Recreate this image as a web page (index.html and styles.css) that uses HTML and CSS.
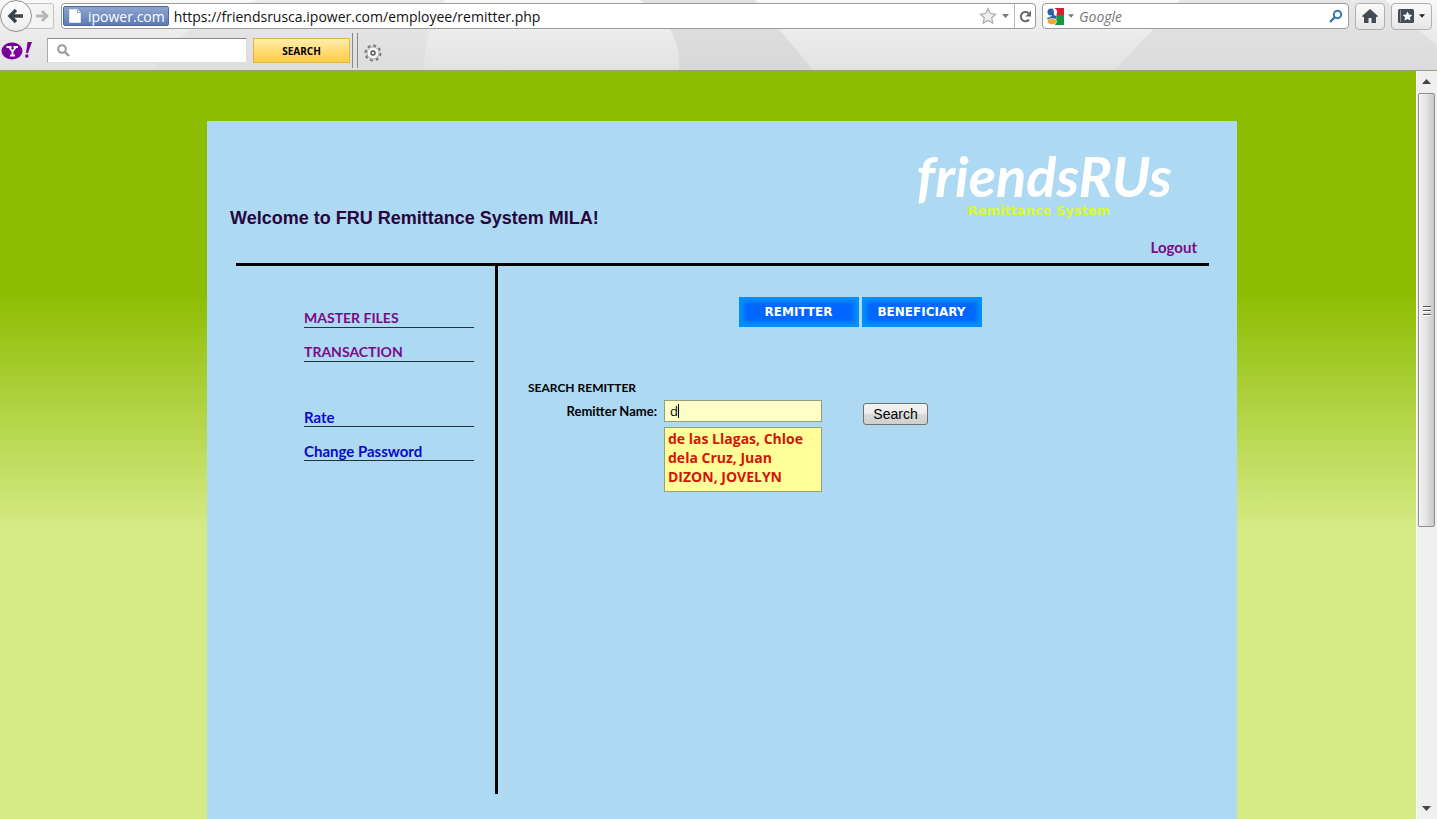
FILE: index.html
```html
<!DOCTYPE html>
<html lang="en">
<head>
<meta charset="utf-8">
<title>FRU Remittance System</title>
<link rel="stylesheet" href="styles.css">
</head>
<body>
<header class="browser">
  <svg class="persona" preserveAspectRatio="none" viewBox="0 0 1437 70" aria-hidden="true">
    <path d="M260 0Q180 20 155 70H424Q424 30 445 0Z" fill="#d3d3d5" opacity=".35"/>
    <path d="M640 0Q682 25 679 70H813L755 0Z" fill="#cfcfd1" opacity=".55"/>
    <path d="M1180 0L1115 70H1437V46L1385 0Z" fill="#cfcfd1" opacity=".4"/>
  </svg>
  <div class="navbar">
    <div class="history">
      <button class="back" aria-label="Back"><svg width="18" height="16" viewBox="0 0 18 16"><path d="M9 2L3 8l6 6M3.500 8H16" fill="none" stroke="#3b444d" stroke-width="3.400"/></svg></button>
      <button class="forward" aria-label="Forward"><svg width="13" height="14" viewBox="0 0 13 14"><path d="M6 2l5 5-5 5M0 7h10" fill="none" stroke="#b5b8bb" stroke-width="3"/></svg></button>
    </div>
    <div class="address">
      <span class="identity"><svg width="12" height="14" viewBox="0 0 12 14"><path d="M.5.500h8l3 3v10H.5z" fill="#fff" stroke="#dbe2ef"/><path d="M8.500.500v3h3" fill="none" stroke="#9aa9c8"/></svg>ipower.com</span>
      <input class="url" aria-label="Address" value="https://friendsrusca.ipower.com/employee/remitter.php">
      <button class="plain" aria-label="Bookmark"><svg width="18" height="18" viewBox="0 0 18 18"><path d="M9 1.500l2.300 5 5.400.600-4 3.700 1.100 5.400L9 13.500l-4.800 2.700 1.100-5.400-4-3.700 5.400-.600z" fill="#eee" stroke="#aaa" stroke-width="1.200"/></svg></button>
      <button class="plain" aria-label="History list"><svg width="7" height="4" viewBox="0 0 7 4"><path d="M0 0h7L3.500 4z" fill="#777"/></svg></button>
      <button class="plain reload" aria-label="Reload"><svg width="13" height="13" viewBox="0 0 13 13"><path d="M10 9.500A4.600 4.600 0 1 1 9.500 3.200" fill="none" stroke="#666" stroke-width="2"/><path d="M12 .5v6H6.500z" fill="#666"/></svg></button>
    </div>
    <div class="engine">
      <svg width="17" height="17" viewBox="0 0 17 17"><path d="M8 0h9v7H9z" fill="#d3222a"/><path d="M10 7h7v10H8z" fill="#129a43"/><path d="M0 0h8v11H0z" fill="#fff"/><circle cx="4" cy="4" r="3.500" fill="#2c5fab"/><path d="M0 10q5-1 7-5l3 3-2 4H1z" fill="#2c5fab"/><path d="M6 0q5 1 4 5l-1 3q-3-1-2-4z" fill="#fff"/><ellipse cx="5" cy="13.500" rx="4.500" ry="3" fill="#eaa927" stroke="#fff" stroke-width=".6"/></svg>
      <svg width="6" height="4" viewBox="0 0 7 4"><path d="M0 0h7L3.500 4z" fill="#777"/></svg>
      <input class="engine-input" aria-label="Google search" placeholder="Google">
      <button class="plain" aria-label="Go"><svg width="14" height="14" viewBox="0 0 14 14"><circle cx="8.500" cy="5.500" r="3.700" fill="#f4fbff" stroke="#3877b5" stroke-width="2"/><path d="M5.800 8.200L1 13" stroke="#3877b5" stroke-width="2.400"/></svg></button>
    </div>
    <button class="tool" aria-label="Home"><svg width="16" height="14" viewBox="0 0 16 14"><path d="M8 0l8 7-1 1.200-1-.8V14H9.500V9h-3v5H2V7.400l-1 .8L0 7z" fill="#434b54"/></svg></button>
    <button class="tool wide" aria-label="Bookmarks"><svg width="16" height="14" viewBox="0 0 16 14"><rect width="16" height="14" rx="1.500" fill="#434b54"/><path d="M2.500 1v12" stroke="#8c959e"/><path d="M9.500 2.500l1.500 3 3.300.400-2.400 2.300.6 3.300-3-1.600-3 1.600.6-3.300L4.700 5.900 8 5.500z" fill="#fff"/></svg><svg width="6" height="4" viewBox="0 0 7 4"><path d="M0 0h7L3.500 4z" fill="#222"/></svg></button>
  </div>
  <div class="yahoo">
    <svg width="31" height="20" viewBox="0 0 31 20" role="img" aria-label="Yahoo"><ellipse cx="11" cy="10" rx="10.500" ry="8.500" fill="#7b0099"/><path d="M5.500 6h5M12.500 6h4.500M8 6l3.500 4.500L15 6M11.500 10v4M9 14.500h5" fill="none" stroke="#fff" stroke-width="1.800"/><path d="M26.500 1H31l-4 11h-2zM24.300 13.500h3v3h-3z" fill="#7b0099"/></svg>
    <label class="ysearch"><svg width="13" height="13" viewBox="0 0 13 13"><circle cx="5" cy="5" r="3.800" fill="none" stroke="#999" stroke-width="2"/><path d="M8 8l4 4" stroke="#999" stroke-width="2.400"/></svg><input class="ysearch-input" aria-label="Yahoo search"></label>
    <button class="ybutton">SEARCH</button>
    <span class="divider"></span>
    <button class="plain gear" aria-label="Settings"><svg width="18" height="18" viewBox="0 0 18 18"><circle cx="9" cy="9" r="7.500" fill="none" stroke="#777" stroke-width="2" stroke-dasharray="3 2.890"/><circle cx="9" cy="9" r="6" fill="#f4f4f4" stroke="#999" stroke-width=".8"/><circle cx="9" cy="9" r="2" fill="#eee" stroke="#555" stroke-width="1.400"/></svg></button>
  </div>
</header>
<div class="view">
  <div class="page">
    <div class="panel">
      <div class="banner">
        <h1 class="welcome">Welcome to FRU Remittance System MILA!</h1>
        <div class="brand">
          <div class="logo"><span class="logo-name">friendsRUs</span><span class="logo-sub">Remittance System</span></div>
          <a class="logout" href="#">Logout</a>
        </div>
      </div>
      <div class="columns">
        <nav class="menu">
          <a class="item visited" href="#">MASTER FILES</a>
          <a class="item visited" href="#">TRANSACTION</a>
          <a class="item second" href="#">Rate</a>
          <a class="item" href="#">Change Password</a>
        </nav>
        <main class="main">
          <div class="tabs">
            <button class="tab">REMITTER</button>
            <button class="tab">BENEFICIARY</button>
          </div>
          <h2 class="heading">SEARCH REMITTER</h2>
          <form class="search">
            <label class="label" for="name">Remitter Name:</label>
            <div class="field">
              <input class="name" id="name" value="d" autocomplete="off">
              <span class="caret"></span>
              <ul class="matches">
                <li>de las Llagas, Chloe</li>
                <li>dela Cruz, Juan</li>
                <li>DIZON, JOVELYN</li>
              </ul>
            </div>
            <button class="submit" type="button">Search</button>
          </form>
        </main>
      </div>
    </div>
  </div>
  <div class="scrollbar" aria-hidden="true">
    <svg class="arrow" width="9" height="5" viewBox="0 0 9 5"><path d="M0 5h9L4.500 0z" fill="#444"/></svg>
    <div class="thumb"><svg width="8" height="11" viewBox="0 0 8 11"><path d="M0 1.500h8M0 5.500h8M0 9.500h8" stroke="#555"/><path d="M0 2.500h8M0 6.500h8M0 10.500h8" stroke="#fff"/></svg></div>
    <svg class="arrow" width="9" height="5" viewBox="0 0 9 5"><path d="M0 0h9L4.500 5z" fill="#444"/></svg>
  </div>
</div>
</body>
</html>
```
FILE: styles.css
```css
* { box-sizing: border-box; }
body {
  margin: 0;
  height: 100vh;
  display: flex;
  flex-direction: column;
  overflow: hidden;
  font-family: Lato, "Open Sans", sans-serif;
}
button, input { margin: 0; padding: 0; border: 0; background: none; outline: none; font: inherit; }
svg { flex: none; display: block; }

.browser {
  position: relative;
  height: 71px;
  flex: none;
  border-bottom: 1px solid #96a080;
  background: linear-gradient(#f8f8f8, #ececec 45%, #e2e2e3);
}
.persona { position: absolute; inset: 0; width: 100%; height: 100%; }
.navbar {
  position: relative;
  display: flex;
  align-items: center;
  height: 32px;
  padding-right: 5px;
  font-family: "Open Sans", "Noto Sans", sans-serif;
  font-size: 14px;
}
.history { display: flex; align-items: center; width: 54px; margin-right: 7px; }
.back {
  position: relative;
  z-index: 1;
  display: grid;
  place-items: center;
  width: 32px;
  height: 32px;
  border: 1px solid #929292;
  border-radius: 50%;
  background: linear-gradient(#fff, #ececec);
}
.forward {
  display: flex;
  align-items: center;
  flex: 1;
  height: 26px;
  margin-left: -8px;
  padding-left: 11px;
  border: 1px solid #c2c2c2;
  border-radius: 3px;
  background: #f4f4f4;
}
.address, .engine {
  display: flex;
  align-items: center;
  height: 26px;
  border: 1px solid #9b9b9f;
  border-radius: 4px;
  background: #fff;
}
.address { flex: 1; padding-left: 1px; margin-right: 6px; gap: 5px; }
.identity {
  display: flex;
  align-items: center;
  gap: 7px;
  height: 20px;
  padding: 0 3px 0 5px;
  border: 1px solid #4c689f;
  border-radius: 2px;
  background: linear-gradient(#8fa5d0, #5d7ab2);
  color: #fff;
}
.url { flex: 1; min-width: 0; color: #111; }
.plain { display: grid; place-items: center; }
.reload { width: 21px; height: 24px; border-left: 1px solid #bbb; }
.engine { width: 307px; margin-right: 6px; padding: 0 5px 0 4px; gap: 4px; }
.engine-input { flex: 1; min-width: 0; padding-left: 1px; }
.engine-input::placeholder { color: #777; font-style: italic; opacity: 1; }
.tool {
  display: flex;
  align-items: center;
  justify-content: center;
  gap: 5px;
  width: 30px;
  height: 27px;
  margin-right: 6px;
  border: 1px solid #b0b0b4;
  border-radius: 4px;
  background: linear-gradient(#fafafa, #e6e6e9);
}
.wide { width: 41px; margin-right: 0; }
.yahoo { position: relative; display: flex; align-items: center; height: 37px; padding-left: 1px; }
.ysearch {
  display: flex;
  align-items: center;
  width: 200px;
  height: 25px;
  margin-left: 15px;
  padding-left: 9px;
  border: 1px solid #ddd;
  border-top-color: #888;
  border-left-color: #aaa;
  background: #fff;
}
.ysearch-input { flex: 1; min-width: 0; }
.ybutton {
  width: 97px;
  height: 25px;
  margin: 0 2px 0 6px;
  border: 1px solid #e3b04a;
  background: linear-gradient(#ffedae, #ffcd3f);
  font: bold 10px "Open Sans", sans-serif;
}
.divider { width: 6px; height: 35px; margin-right: 6px; border: 1px solid #888; border-width: 0 1px; }
.gear { padding-top: 4px; }

.view { display: flex; flex: 1; min-height: 0; }
.page {
  flex: 1;
  display: flex;
  justify-content: center;
  padding: 50px 0 0 28px;
  background: linear-gradient(#8cbd00, #8cbd00 220px, #d6ea86 460px);
}
.panel {
  display: flex;
  flex-direction: column;
  width: 1030px;
  padding: 0 28px 25px 29px;
  background: #add9f3;
}
.banner { display: flex; justify-content: space-between; height: 142px; flex: none; }
.welcome {
  margin: 86px 0 0 -6px;
  color: #29063d;
  font: bold 18px/22px "Liberation Sans", Arial, sans-serif;
}
.brand { display: flex; flex-direction: column; align-items: flex-end; padding: 27px 12px 0 0; }
.logo { display: flex; flex-direction: column; margin-right: 25px; }
.logo-name { color: #fff; font: italic bold 56px/56px Lato, sans-serif; }
.logo-sub { padding-left: 51px; color: #d9fb28; font: bold 13px/14px "DejaVu Sans", Verdana, sans-serif; }
.logout { margin-top: 20px; color: #7a0a88; font-size: 15px; font-weight: bold; line-height: 18px; text-decoration: none; }

.columns { display: flex; flex: 1; border-top: 3px solid #000; }
.menu {
  display: flex;
  flex-direction: column;
  gap: 14px;
  width: 262px;
  padding: 42px 21px 0 68px;
  border-right: 3px solid #000;
}
.item {
  height: 20px;
  border-bottom: 1px solid #24323b;
  color: #0a0ac8;
  font-size: 15px;
  font-weight: bold;
  line-height: 20px;
  text-decoration: none;
}
.visited { color: #7a0a88; font-size: 14px; }
.second { margin-top: 31px; }
.main { flex: 1; padding: 31px 17px 0 30px; }
.tabs { display: flex; justify-content: center; gap: 3px; }
.tab {
  width: 120px;
  height: 30px;
  background: #0066ff;
  box-shadow: inset 0 0 4px 5px #0090fb;
  color: #fff;
  font: bold 12px "DejaVu Sans", Verdana, sans-serif;
}
.heading { margin: 52px 0 3px; font-size: 12px; line-height: 18px; }
.search { display: flex; align-items: flex-start; }
.label { width: 129px; margin-right: 7px; font-size: 13px; font-weight: bold; line-height: 22px; text-align: right; }
.field { position: relative; width: 158px; margin-right: 41px; }
.name {
  display: block;
  width: 100%;
  height: 22px;
  padding: 0 5px;
  border: 1px solid #96a077;
  background: #ffffc8;
  font-family: "Open Sans", sans-serif;
  font-size: 13px;
}
.caret { position: absolute; top: 4px; left: 14px; width: 1px; height: 14px; background: #000; }
.matches {
  height: 65px;
  margin: 5px 0 0;
  padding: 1px 3px;
  border: 1px solid #96a077;
  background: #ffff99;
  color: #d41408;
  font: bold 14px/19px "Open Sans", sans-serif;
  list-style: none;
}
.submit {
  width: 65px;
  height: 22px;
  margin-top: 3px;
  border: 1px solid #707070;
  border-radius: 3px;
  background: linear-gradient(#f3f3f3, #ebebeb 50%, #dadada 50%, #cfcfcf);
  font: 14px "Liberation Sans", Arial, sans-serif;
}

.scrollbar {
  display: flex;
  flex-direction: column;
  align-items: center;
  width: 21px;
  padding: 8px 2px 8px 1px;
  border-left: 1px solid #fff;
  background: #efeff0;
}
.thumb {
  display: grid;
  place-items: center;
  width: 100%;
  height: 434px;
  margin: 9px 0 auto;
  border: 1px solid #8e8e8e;
  border-radius: 2px;
  background: linear-gradient(90deg, #f4f4f4, #e2e2e4 50%, #c8c8cc);
}
```
